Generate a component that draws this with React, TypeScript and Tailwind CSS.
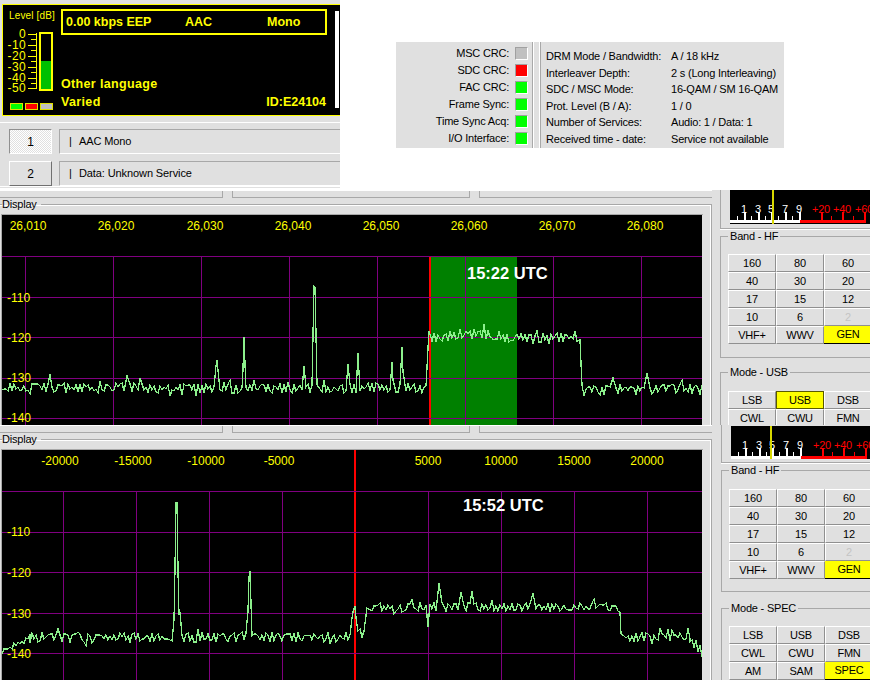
import type { ReactNode } from 'react'

type Seg = [number, number, number, number, number]
type Pt = [number, number]

// noise floor + hand placed carriers, in page coordinates
function buildTrace(segs: Seg[], peaks: Pt[], seed: number) {
  let s = seed
  const rnd = () => {
    s = (s * 1664525 + 1013904223) % 4294967296
    return s / 4294967296
  }
  const pts: Pt[] = []
  for (const [x0, x1, b0, b1, amp] of segs) {
    let flip = 1
    for (let x = x0; x <= x1; x += 2) {
      const base = b0 + ((b1 - b0) * (x - x0)) / (x1 - x0 || 1)
      let y = base + flip * (0.25 + rnd()) * amp
      flip = rnd() < 0.7 ? -flip : flip
      if (rnd() < 0.05) y -= 5
      if (rnd() < 0.04) y += 4
      pts.push([x, Math.round(y)])
    }
  }
  const xs = new Set(peaks.map((p) => Math.round(p[0])))
  const kept = pts.filter((p) => !xs.has(p[0]) && !xs.has(p[0] - 1) && !xs.has(p[0] + 1))
  return [...kept, ...peaks]
    .sort((a, b) => a[0] - b[0])
    .map((p) => p.join(','))
    .join(' ')
}

const trace1 = buildTrace(
  [
    [2, 426, 388, 388, 4],
    [432, 463, 338, 336, 4],
    [464, 492, 333, 334, 4.5],
    [493, 579, 337, 338, 4],
    [586, 702, 390, 389, 4],
  ],
  [
    [50, 374],
    [127, 376],
    [216, 366],
    [217, 360],
    [218, 370],
    [242, 388],
    [243, 369],
    [244, 337],
    [245, 364],
    [246, 388],
    [304, 366],
    [312, 385],
    [313, 335],
    [314, 286],
    [315, 287],
    [316, 335],
    [317, 385],
    [348, 364],
    [358, 353],
    [392, 362],
    [393, 380],
    [402, 347],
    [403, 372],
    [428, 348],
    [429, 331],
    [580, 340],
    [581, 363],
    [582, 385],
    [584, 396],
    [613, 378],
    [647, 373],
  ],
  7,
)

const trace2 = buildTrace(
  [
    [2, 30, 653, 637, 3],
    [30, 352, 638, 637, 4],
    [358, 366, 630, 634, 2],
    [372, 620, 607, 607, 3.5],
    [622, 690, 637, 637, 3.5],
    [690, 702, 640, 655, 2],
  ],
  [
    [174, 620],
    [175, 568],
    [176, 503],
    [177, 503],
    [178, 570],
    [179, 615],
    [180, 612],
    [248, 611],
    [249, 577],
    [250, 571],
    [251, 604],
    [252, 636],
    [352, 618],
    [353, 612],
    [355, 606],
    [356, 618],
    [367, 608],
    [428, 627],
    [439, 583],
    [461, 592],
    [472, 591],
    [533, 593],
    [620, 612],
    [621, 634],
  ],
  23,
)

function Spectrum({
  top,
  height,
  hLines,
  vLines,
  freqs,
  levels,
  points,
  time,
  children,
}: {
  top: number
  height: number
  hLines: number[]
  vLines: number[]
  freqs: [string, number][]
  levels: number[]
  points: string
  time: [number, number, string]
  children?: ReactNode
}) {
  return (
    <svg
      width={700}
      height={height}
      viewBox={`2 ${top} 700 ${height}`}
      className="block bg-black"
      fontFamily="'Liberation Sans', sans-serif"
    >
      {children}
      <g stroke="#800080" shapeRendering="crispEdges">
        {hLines.map((y) => (
          <line key={y} x1={2} x2={702} y1={y} y2={y} />
        ))}
        {vLines.map((x) => (
          <line key={x} x1={x} x2={x} y1={hLines[0]} y2={top + height} />
        ))}
      </g>
      {freqs.map(([label, x]) => (
        <text key={label} x={x} y={top + 15} fill="#ffff00" fontSize={12} letterSpacing={0} textAnchor="middle">
          {label}
        </text>
      ))}
      {levels.map((y, i) => (
        <text key={y} x={7} y={y + 5} fill="#ffff00" fontSize={12} letterSpacing={0}>
          {-110 - i * 10}
        </text>
      ))}
      <polyline points={points} fill="none" stroke="#8cf08c" strokeWidth={1.3} shapeRendering="crispEdges" />
      <text x={time[0]} y={time[1]} fill="#fff" fontSize={16.5} fontWeight={700} letterSpacing={0}>
        {time[2]}
      </text>
    </svg>
  )
}

function SMeter({ needle, height, base }: { needle: number; height: number; base: number }) {
  const minor = [737, 751, 765, 778, 792, 831, 853]
  const major = [744, 758, 771, 785, 799]
  const red = [821, 842, 864]
  return (
    <svg width={140} height={height} className="block bg-black" fontFamily="'Liberation Sans', sans-serif" shapeRendering="crispEdges">
      <g transform={`translate(-730 ${base})`}>
        <rect x={730} y={31} width={70} height={3} fill="#fff" />
        <rect x={800} y={31} width={66} height={3} fill="#f00" />
        {major.map((x) => (
          <rect key={x} x={x} y={23} width={2} height={8} fill="#fff" />
        ))}
        {minor.slice(0, 5).map((x) => (
          <rect key={x} x={x} y={27} width={1} height={4} fill="#fff" />
        ))}
        {minor.slice(5).map((x) => (
          <rect key={x} x={x} y={27} width={1} height={4} fill="#f00" />
        ))}
        {red.map((x) => (
          <rect key={x} x={x} y={23} width={2} height={8} fill="#f00" />
        ))}
        {major.map((x, i) => (
          <text key={x} x={x} y={24} fill="#fff" fontSize={11} textAnchor="middle" shapeRendering="auto">
            {i * 2 + 1}
          </text>
        ))}
        {red.map((x, i) => (
          <text key={x} x={x} y={24} fill="#f00" fontSize={11} textAnchor="middle" shapeRendering="auto">
            {`+${(i + 1) * 20}`}
          </text>
        ))}
        <rect x={needle} y={-5} width={2} height={40} fill="#d8d800" />
      </g>
    </svg>
  )
}

function KeyGrid({ keys, active, selected }: { keys: string[]; active: string; selected?: boolean }) {
  return (
    <div className="grid grid-cols-[48px_48px_48px] auto-rows-[18px]">
      {keys.map((k) => {
        const on = k === active
        const disabled = k === 'off'
        return (
          <div
            key={k}
            className={
              on
                ? selected
                  ? 'flex items-center justify-center bg-[#ffff00] border border-[#5a5a00]'
                  : 'flex items-center justify-center bg-[#ffff00] border-b border-black'
                : 'flex items-center justify-center bg-[#e0e0e0] border-t border-l border-t-white border-l-white border-b border-r border-b-[#909090] border-r-[#909090]'
            }
          >
            <span className={disabled ? 'text-[#c4c4c4]' : ''}>{disabled ? '2' : k}</span>
          </div>
        )
      })}
    </div>
  )
}

const bandKeys = ['160', '80', '60', '40', '30', '20', '17', '15', '12', '10', '6', 'off', 'VHF+', 'WWV', 'GEN']
const modeKeys = ['LSB', 'USB', 'DSB', 'CWL', 'CWU', 'FMN', 'AM', 'SAM', 'SPEC']

function Strip() {
  return (
    <div className="h-[8px] flex gap-[9px] border-t border-white">
      <div className="w-[223px] border-r border-b border-[#a8a8a8]" />
      <div className="w-[238px] border-l border-r border-b border-[#a8a8a8]" />
      <div className="flex-1 border-l border-b border-[#a8a8a8]" />
    </div>
  )
}

function DisplayBox({ children }: { children: ReactNode }) {
  return (
    <fieldset className="w-[712px] min-w-0 border-t border-r border-[#a8a8a8] shadow-[inset_-1px_1px_0_#fff]">
      <legend className="ml-[2px] pr-[4px] h-[13px] leading-[13px]">Display</legend>
      <div className="mt-[3px] ml-[1px] w-[702px] border-t border-l border-[#a8a8a8] border-r-0">{children}</div>
    </fieldset>
  )
}

function Led({ color }: { color: string }) {
  return <span className="block w-[13px] h-[13px] border border-t-[#a0a0a0] border-l-[#a0a0a0] border-b-white border-r-white" style={{ background: color }} />
}

const crcRows: [string, string][] = [
  ['MSC CRC:', '#c0c0c0'],
  ['SDC CRC:', '#ff0000'],
  ['FAC CRC:', '#00ff00'],
  ['Frame Sync:', '#00ff00'],
  ['Time Sync Acq:', '#00ff00'],
  ['I/O Interface:', '#00ff00'],
]

const infoRows: [string, string][] = [
  ['DRM Mode / Bandwidth:', 'A / 18 kHz'],
  ['Interleaver Depth:', '2 s (Long Interleaving)'],
  ['SDC / MSC Mode:', '16-QAM / SM 16-QAM'],
  ['Prot. Level (B / A):', '1 / 0'],
  ['Number of Services:', 'Audio: 1 / Data: 1'],
  ['Received time - date:', 'Service not available'],
]

function LevelMeter() {
  const y = [33, 44, 55, 66, 77, 87]
  return (
    <svg width={58} height={110} viewBox="3 5 58 110" className="block shrink-0" fontFamily="'Liberation Sans', sans-serif" fontWeight={400}>
      <text x={9} y={19} fill="#ffff00" fontSize={10} letterSpacing={0.15}>
        Level [dB]
      </text>
      {y.map((v, i) => (
        <text key={v} x={26} y={v + 5} fill="#ffff00" fontSize={12} textAnchor="end">
          {i === 0 ? '0' : -i * 10}
        </text>
      ))}
      <g shapeRendering="crispEdges">
        <rect x={36} y={33} width={1} height={56} fill="#ffff00" />
        {y.map((v) => (
          <rect key={v} x={28} y={v + 1} width={8} height={1} fill="#ffff00" />
        ))}
        {[39, 50, 61, 72, 83].map((v) => (
          <rect key={v} x={31} y={v} width={5} height={1} fill="#ffff00" />
        ))}
        <rect x={40} y={33} width={12} height={57} fill="none" stroke="#ffff00" strokeWidth={2} />
        <rect x={41} y={61} width={10} height={28} fill="#00c000" />
        <rect x={10.5} y={103.5} width={12} height={6} fill="#00ff00" stroke="#e0e000" />
        <rect x={25.5} y={103.5} width={12} height={6} fill="#ff0000" stroke="#e0e000" />
        <rect x={40.5} y={103.5} width={12} height={6} fill="#c0c0c0" stroke="#e0e000" />
      </g>
    </svg>
  )
}

export default function App() {
  return (
    <div className="w-[870px] h-[680px] overflow-hidden bg-[#e0e0e0] text-[11px] tracking-[-0.2px] text-black font-['Liberation_Sans',sans-serif]">
      {/* pasted status shots on white */}
      <div className="h-[190px] bg-white flex items-start">
        <div className="w-[340px] h-[188px] bg-[#e0e0e0] pt-[4px] pl-[2px]">
          <div className="w-[338px] h-[112px] bg-black border-y border-l border-[#ffff00] flex text-[#ffff00] font-bold text-[12.5px] tracking-[0.35px]">
            <LevelMeter />
            <div className="w-[266px] flex flex-col">
              <div className="mt-[4px] h-[26px] border-2 border-[#ffff00] flex items-center pl-[3px] tracking-normal">
                <span className="w-[119px]">0.00 kbps EEP</span>
                <span className="w-[82px]">AAC</span>
                <span>Mono</span>
              </div>
              <div className="mt-[40px] leading-[18px]">Other language</div>
              <div className="flex justify-between leading-[18px]">
                <span>Varied</span>
                <span className="tracking-normal pr-px">ID:E24104</span>
              </div>
            </div>
            <div className="ml-[8px] mt-[6px] w-[4px] h-[97px] bg-white" />
          </div>
          <div className="mt-[6px] -ml-[2px] h-[65px] border-y border-white pl-[9px] pt-[6px] flex flex-col gap-[7px]">
            <div className="flex gap-[7px] h-[25px] text-[12px] tracking-normal">
              <div className="w-[43px] flex items-center justify-center border border-t-[#909090] border-l-[#909090] border-b-white border-r-white bg-[repeating-conic-gradient(#ffffff_0_25%,#e0e0e0_0_50%)] bg-[length:2px_2px]">
                1
              </div>
              <div className="flex-1 flex items-center pl-[9px] border-t border-l border-t-[#a8a8a8] border-l-[#a8a8a8] border-b border-b-white text-[11px] tracking-[-0.1px]">
                <span className="w-[10px]">|</span>AAC Mono
              </div>
            </div>
            <div className="flex gap-[7px] h-[25px] text-[12px] tracking-normal">
              <div className="w-[43px] flex items-center justify-center border border-t-white border-l-white border-b-[#707070] border-r-[#707070]">
                2
              </div>
              <div className="flex-1 flex items-center pl-[9px] border-t border-l border-t-[#a8a8a8] border-l-[#a8a8a8] border-b border-b-white text-[11px] tracking-[-0.1px]">
                <span className="w-[10px]">|</span>Data: Unknown Service
              </div>
            </div>
          </div>
        </div>

        <div className="ml-[56px] mt-[42px] w-[388px] h-[106px] bg-[#e0e0e0] flex">
          <div className="w-[136px] pt-[3px] shrink-0">
            {crcRows.map(([label, color]) => (
              <div key={label} className="h-[17px] flex items-center justify-end gap-[6px] pr-[4px]">
                <span>{label}</span>
                <Led color={color} />
              </div>
            ))}
          </div>
          <div className="w-[9px] shrink-0 border-x border-[#a8a8a8] shadow-[inset_1px_0_0_#fff,inset_-1px_0_0_#fff]" />
          <div className="pl-[5px] pt-[6px]">
            {infoRows.map(([label, value]) => (
              <div key={label} className="h-[16.6px] flex items-center whitespace-nowrap">
                <span className="w-[125px]">{label}</span>
                <span>{value}</span>
              </div>
            ))}
          </div>
        </div>
      </div>

      {/* first capture */}
      <section className="h-[235px] flex overflow-hidden">
        <div className="w-[712px] shrink-0">
          <Strip />
          <DisplayBox>
            <Spectrum
              top={215}
              height={210}
              hLines={[256, 297, 337, 378, 418]}
              vLines={[25, 113, 201, 289, 377, 465, 553, 641]}
              freqs={[
                ['26,010', 28],
                ['26,020', 116],
                ['26,030', 205],
                ['26,040', 293],
                ['26,050', 381],
                ['26,060', 469],
                ['26,070', 557],
                ['26,080', 645],
              ]}
              levels={[297, 337, 377, 417]}
              points={trace1}
              time={[467, 279, '15:22 UTC']}
            >
              <rect x={430} y={257} width={87} height={168} fill="#008000" />
              <rect x={429} y={256} width={2} height={169} fill="#ff0000" />
            </Spectrum>
          </DisplayBox>
        </div>
        <div className="pl-[8px] flex-1 min-w-0">
          <div className="h-[39px] pl-[9px] border-l border-b border-[#a8a8a8] shadow-[0_1px_0_#fff]">
            <SMeter needle={772} height={34} base={-1} />
          </div>
          <fieldset className="min-w-0 border-y border-l border-[#a8a8a8] pl-[7px] pb-[13px] pt-[11px]">
            <legend className="px-[2px] h-[14px] leading-[14px]">Band - HF</legend>
            <KeyGrid keys={bandKeys} active="GEN" />
          </fieldset>
          <fieldset className="mt-[7px] min-w-0 border-t border-l border-[#a8a8a8] pl-[7px] pt-[12px]">
            <legend className="px-[2px] h-[14px] leading-[14px]">Mode - USB</legend>
            <KeyGrid keys={modeKeys.slice(0, 6)} active="USB" selected />
          </fieldset>
        </div>
      </section>

      {/* second capture */}
      <section className="h-[255px] flex overflow-hidden">
        <div className="w-[712px] shrink-0">
          <Strip />
          <DisplayBox>
            <Spectrum
              top={450}
              height={230}
              hLines={[491, 532, 572, 613, 653]}
              vLines={[63, 136, 209, 282, 428, 501, 574, 647]}
              freqs={[
                ['-20000', 60],
                ['-15000', 133],
                ['-10000', 206],
                ['-5000', 279],
                ['5000', 428],
                ['10000', 501],
                ['15000', 574],
                ['20000', 647],
              ]}
              levels={[531, 572, 613, 653]}
              points={trace2}
              time={[463, 511, '15:52 UTC']}
            >
              <rect x={354} y={450} width={2} height={230} fill="#ff0000" />
            </Spectrum>
          </DisplayBox>
        </div>
        <div className="pl-[9px] flex-1 min-w-0">
          <div className="h-[38px] pt-[1px] pl-[9px] border-l border-b border-[#a8a8a8] shadow-[0_1px_0_#fff]">
            <SMeter needle={769} height={33} base={-1} />
          </div>
          <fieldset className="min-w-0 border-y border-l border-[#a8a8a8] pl-[7px] pb-[12px] pt-[12px]">
            <legend className="px-[2px] h-[14px] leading-[14px]">Band - HF</legend>
            <KeyGrid keys={bandKeys} active="GEN" />
          </fieldset>
          <fieldset className="mt-[9px] min-w-0 border-t border-l border-[#a8a8a8] pl-[7px] pt-[11px]">
            <legend className="px-[2px] h-[14px] leading-[14px]">Mode - SPEC</legend>
            <KeyGrid keys={modeKeys} active="SPEC" />
          </fieldset>
        </div>
      </section>
    </div>
  )
}
